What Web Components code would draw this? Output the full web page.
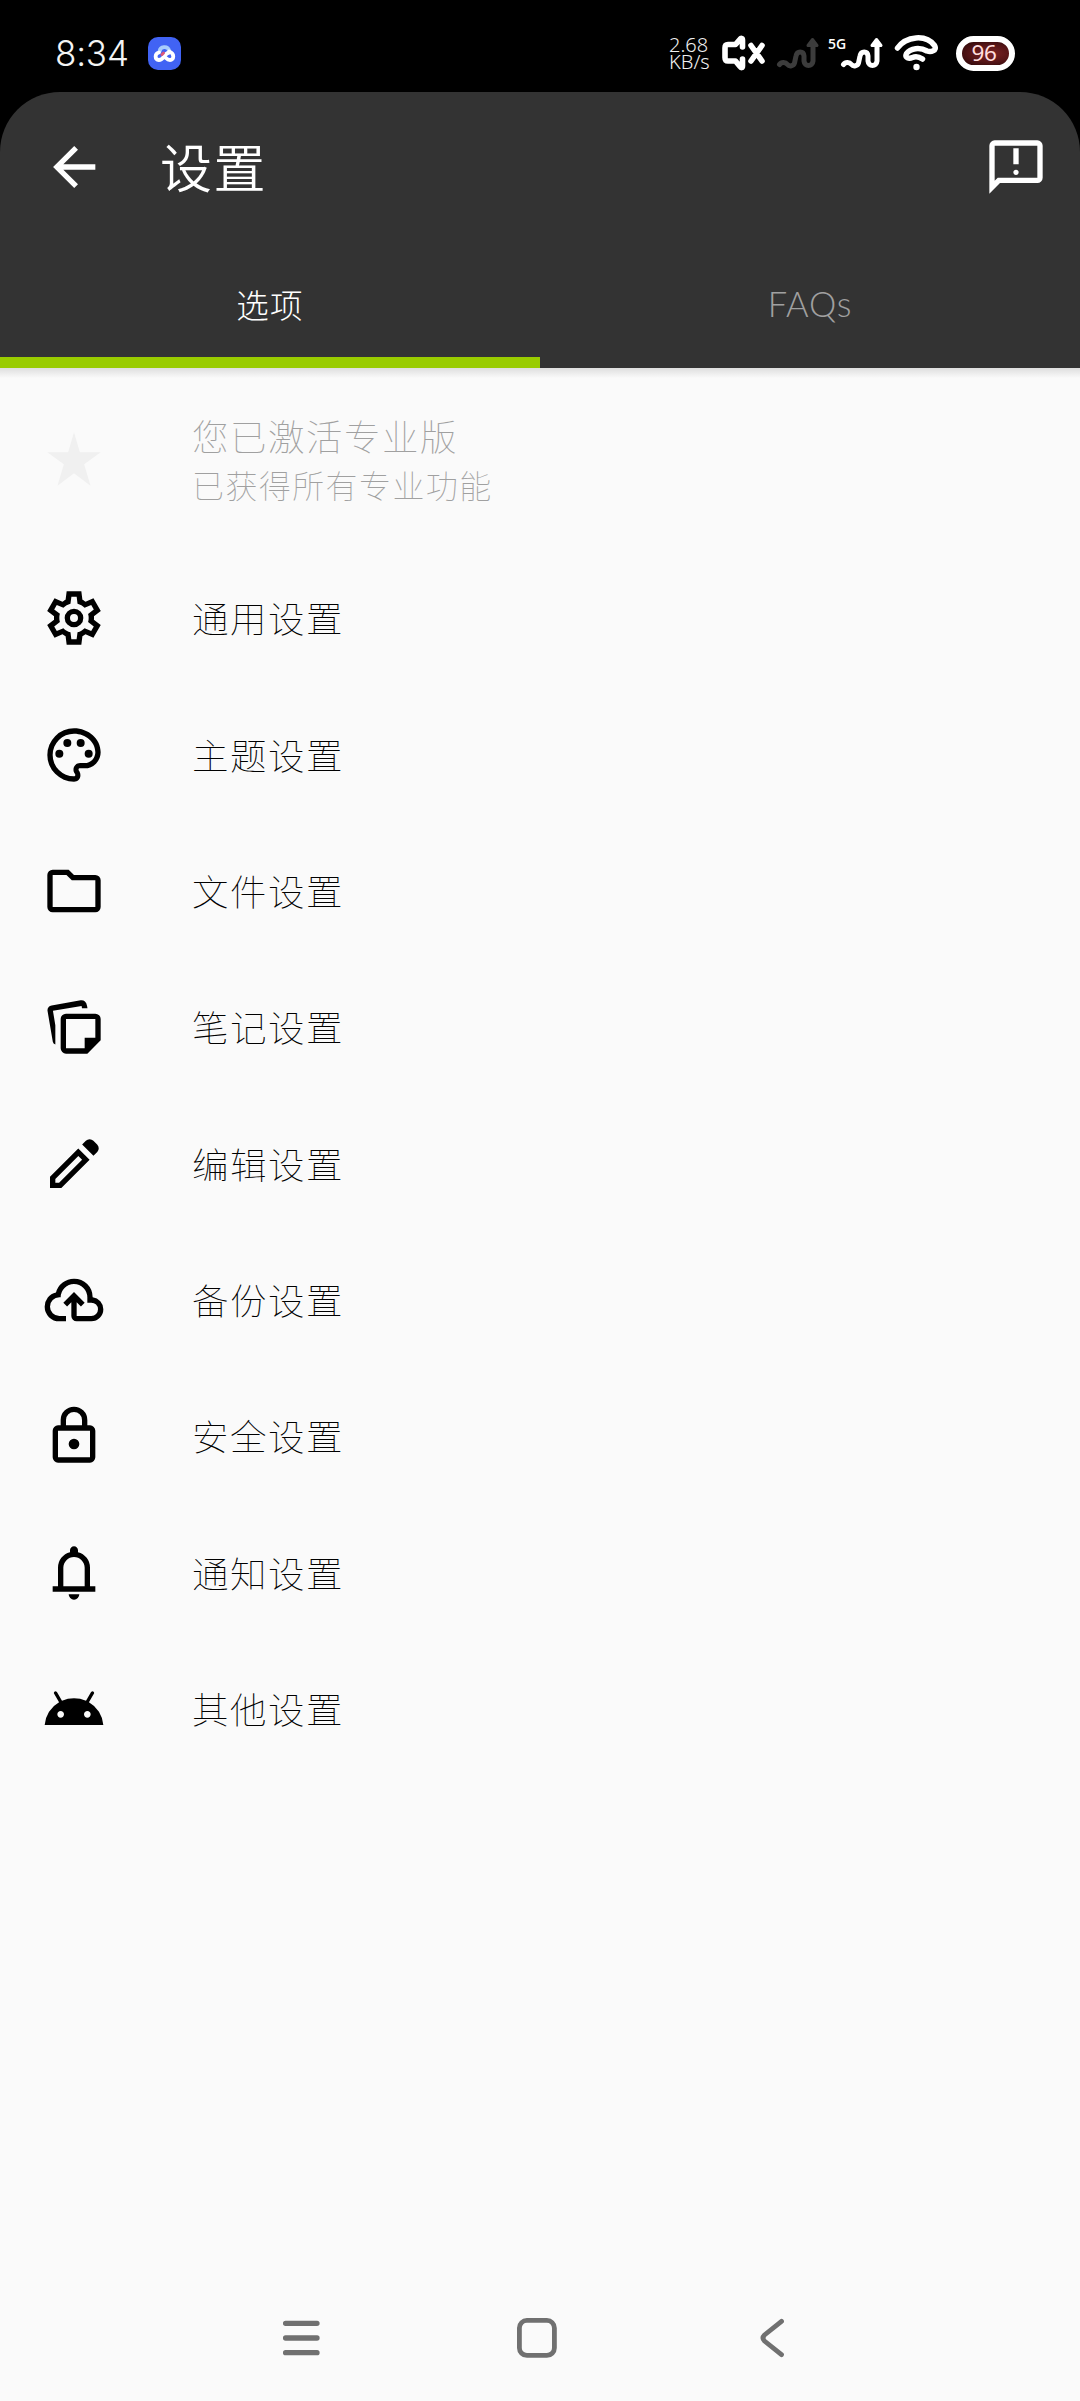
<!DOCTYPE html>
<html lang="zh-CN">
<head>
<meta charset="utf-8">
<title>设置</title>
<style>
  html, body { margin: 0; padding: 0; background: #fafafa; }
  body { width: 1080px; height: 2401px; overflow: hidden; font-family: "Noto Sans CJK SC", sans-serif; }
</style>
</head>
<body>
<settings-screen></settings-screen>
<script>
const define = (name, html, setup) => {
  const tpl = document.createElement('template');
  tpl.innerHTML = html;
  customElements.define(name, class extends HTMLElement {
    connectedCallback() {
      if (this.shadowRoot) return;
      this.attachShadow({ mode: 'open' }).appendChild(tpl.content.cloneNode(true));
      if (setup) setup(this, this.shadowRoot);
    }
  });
};

const ICONS = {
  back: '<path d="M20,11V13H8L13.5,18.5L12.08,19.92L4.16,12L12.08,4.08L13.5,5.5L8,11H20Z"/>',
  feedback: '<path d="M12 15q.425 0 .713-.288T13 14t-.288-.712T12 13t-.712.288T11 14t.288.713T12 15m-1-4h2V5h-2zM2 22V4q0-.825.588-1.412T4 2h16q.825 0 1.413.588T22 4v12q0 .825-.587 1.413T20 18H6zm3.15-6H20V4H4v13.125z"/>',
  star: '<path d="M12 2L14.2 9.500H22L15.800 14L18.200 22L12 17.300L5.800 22L8.200 14L2 9.500H9.800Z"/>',
  gear: '<path d="m9.25 22l-.4-3.2q-.325-.125-.612-.3t-.563-.375L4.7 19.375l-2.75-4.75l2.575-1.95Q4.5 12.5 4.5 12.337v-.675q0-.162.025-.337L1.95 9.375l2.75-4.75l2.975 1.25q.275-.2.575-.375t.6-.3l.4-3.2h5.5l.4 3.2q.325.125.613.3t.562.375l2.975-1.25l2.75 4.75l-2.575 1.95q.025.175.025.338v.674q0 .163-.05.338l2.575 1.95l-2.75 4.75l-2.95-1.25q-.275.2-.575.375t-.6.3l-.4 3.2zM11 20h1.975l.35-2.65q.775-.2 1.438-.587t1.212-.938l2.475 1.025l.975-1.7l-2.15-1.625q.125-.35.175-.737T17.5 12t-.05-.787t-.175-.738l2.15-1.625l-.975-1.7l-2.475 1.05q-.55-.575-1.212-.962t-1.438-.588L13 4h-1.975l-.35 2.65q-.775.2-1.437.588t-1.213.937L5.55 7.15l-.975 1.7l2.15 1.6q-.125.375-.175.75t-.05.8q0 .4.05.775t.175.75l-2.15 1.625l.975 1.7l2.475-1.05q.55.575 1.213.963t1.437.587z" fill-rule="evenodd"/><circle cx="12" cy="12" r="2.5" fill="none" stroke="currentColor" stroke-width="2"/>',
  palette: '<path fill-rule="evenodd" d="M12,22A10,10 0 0,1 2,12A10,10 0 0,1 12,2C17.5,2 22,6 22,11A6,6 0 0,1 16,17H14.2C13.9,17 13.7,17.2 13.7,17.5C13.7,17.6 13.8,17.7 13.8,17.8C14.2,18.3 14.4,18.9 14.4,19.5C14.5,20.9 13.4,22 12,22M12,4A8,8 0 0,0 4,12A8,8 0 0,0 12,20C12.3,20 12.5,19.8 12.5,19.5C12.5,19.3 12.4,19.2 12.4,19.1C12,18.6 11.8,18.1 11.8,17.5C11.8,16.1 12.9,15 14.3,15H16A4,4 0 0,0 20,11C20,7.1 16.4,4 12,4"/><circle cx="6.5" cy="11.5" r="1.5"/><circle cx="9.5" cy="7.5" r="1.5"/><circle cx="14.5" cy="7.5" r="1.5"/><circle cx="17.5" cy="11.5" r="1.5"/>',
  folder: '<path d="M4 20q-.825 0-1.412-.587T2 18V6q0-.825.588-1.412T4 4h6l2 2h8q.825 0 1.413.588T22 8v10q0 .825-.587 1.413T20 20zm0-2h16V8h-8.825l-2-2H4z"/>',
  notes: '<path fill-rule="evenodd" d="M9 7H20A2 2 0 0 1 22 9V17L17 22H9A2 2 0 0 1 7 20V9A2 2 0 0 1 9 7ZM9 9V20H16V16H20V9Z"/><path d="M5 18.6Q4.2 18.3 4.05 17.5L2.1 6.1Q1.9 5 2.6 4.4Q2.9 4 3.6 3.9L14.5 2Q15.5 1.9 16.1 2.4Q16.7 2.9 16.9 4.1L17.05 5H15L14.85 4.1L4.1 5.9L5 11.3Z"/>',
  pencil: '<path d="M5 19h1.4l8.625-8.625l-1.4-1.4L5 17.6zM19.3 8.925l-4.25-4.2l1.4-1.4q.575-.575 1.413-.575t1.412.575l1.4 1.4q.575.575.6 1.388t-.55 1.387zM17.85 10.4L7.25 21H3v-4.25l10.6-10.6z" fill-rule="evenodd"/>',
  cloud: '<path d="M6.5 20q-2.275 0-3.887-1.575T1 14.575q0-1.95 1.175-3.475T5.25 9.15q.625-2.3 2.5-3.725T12 4q2.925 0 4.963 2.038T19 11q1.725.2 2.863 1.488T23 15.5q0 1.875-1.312 3.188T18.5 20H13q-.825 0-1.412-.587T11 18v-5.15L9.4 14.4L8 13l4-4l4 4l-1.4 1.4l-1.6-1.55V18h5.5q1.05 0 1.775-.725T21 15.5t-.725-1.775T18.5 13H17v-2q0-2.075-1.463-3.537T12 6T8.463 7.463T7 11h-.5q-1.45 0-2.475 1.025T3 14.5t1.025 2.475T6.5 18H9v2z"/>',
  lock: '<path fill-rule="evenodd" d="M6 22q-.825 0-1.412-.587T4 20V10q0-.825.588-1.412T6 8h1V6q0-2.075 1.463-3.537T12 1t3.538 1.463T17 6v2h1q.825 0 1.413.588T20 10v10q0 .825-.587 1.413T18 22zm0-2h12V10H6zm6-3q.825 0 1.413-.587T14 15t-.587-1.412T12 13t-1.412.588T10 15t.588 1.413T12 17M9 8h6V6q0-1.25-.875-2.125T12 3t-2.125.875T9 6z"/>',
  bell: '<path fill-rule="evenodd" d="M4 19v-2h2v-7q0-2.075 1.25-3.687T10.5 4.2v-.7q0-.625.438-1.062T12 2t1.063.438T13.5 3.5v.7q2 .5 3.25 2.113T18 10v7h2v2zm8 3q-.825 0-1.412-.587T10 20h4q0 .825-.587 1.413T12 22m-4-5h8v-7q0-1.65-1.175-2.825T12 6T9.175 7.175T8 10z"/>',
  android: '<path fill-rule="evenodd" d="M1 18q.225-2.675 1.638-4.925T6.4 9.5L4.55 6.3q-.15-.225-.075-.475T4.8 5.45q.2-.125.45-.05t.4.3L7.5 8.9Q9.65 8 12 8t4.5.9l1.85-3.2q.15-.225.4-.3t.45.05q.25.125.325.375t-.075.475L17.6 9.5q2.35 1.325 3.762 3.575T23 18zm6-2.75q.525 0 .888-.363T8.25 14t-.363-.888T7 12.75t-.888.363T5.75 14t.363.888t.887.362m10 0q.525 0 .888-.363T18.25 14t-.363-.888T17 12.75t-.888.363t-.362.887t.363.888t.887.362"/>'
};

define('ui-icon', `<style>
  :host { display: block; width: 64px; height: 64px; flex: none; }
  svg { display: block; width: 64px; height: 64px; fill: currentColor; }
</style><svg viewBox="0 0 24 24"></svg>`,
  (el, root) => { root.querySelector('svg').innerHTML = ICONS[el.getAttribute('name')]; });

define('signal-icon', `<style>
  :host { display: block; width: 44px; height: 34px; flex: none; }
  svg { display: block; }
</style>
<svg width="44" height="34" viewBox="0 0 44 34" fill="none" stroke="currentColor" stroke-width="5" stroke-linecap="round" stroke-linejoin="round">
  <path d="M3.500 28.500C5.500 25.500 9.500 26 11.500 28.500C13.500 31 17.500 30 18.500 27L20 20C21 14.500 27.500 14.500 28 20V25C28.500 31 36.500 31 37 25V10"/>
  <path d="M36.500 3.500L41 9.500H32Z" fill="currentColor" stroke-width="3"/>
</svg>`);

define('status-bar', `<style>
  :host { display: flex; height: 92px; align-items: center; justify-content: space-between; background: #000; color: #fff;
    box-sizing: border-box; padding: 14px 65px 0 55px; }
  .side { display: flex; align-items: center; height: 40px; }
  .time { font: 300 35px/40px Inter, sans-serif; letter-spacing: -0.2px; color: #f4f4f4; width: 93px; }
  .speed { font: 300 20px/17px "Noto Sans", sans-serif; color: #f0f0f0; width: 52px; white-space: nowrap; }
  .mute { margin-right: 11px; }
  .dim { color: #3c3c3c; }
  .g5 { font: 600 14px/14px "Open Sans", sans-serif; width: 12px; height: 33px; margin-left: 8px; white-space: nowrap; }
  .wifi { margin-left: 10px; }
  .battery { display: flex; align-items: center; justify-content: center; box-sizing: border-box; width: 59px; height: 35px;
    border: 6px solid #fff; border-radius: 18px; margin-left: 17px; padding-right: 3px;
    background: radial-gradient(ellipse at 60% 50%, #7a2224 0%, #581517 50%, #260708 100%);
    font: 400 22.500px/24px "Noto Sans", sans-serif; color: #fdd; letter-spacing: -0.4px; }
  svg { display: block; flex: none; }
</style>
<div class="side">
  <div class="time">8:34</div>
  <svg width="33" height="33" viewBox="0 0 33 33"><rect width="33" height="33" rx="10" fill="#4163f4"/>
    <g fill="none" stroke-width="3.800" stroke-linecap="round" stroke-linejoin="round">
      <path d="M11.500 14.500A5 5 0 0 1 21.200 13.500" stroke="#a9cdfb"/>
      <path d="M21.200 14.500C27 16.500 26 23 22 23C19.500 23 18.500 21.500 17.500 20.500M11 15.500C6.500 16.500 6.500 22.500 11 23C13.500 23 14.500 21.500 16 19.500C18 17 19 15.500 21.500 15.500" stroke="#fff"/>
      <path d="M14 17.500L15.500 16" stroke="#d9567c" stroke-width="3"/>
    </g></svg>
</div>
<div class="side">
  <div class="speed">2.68<br>KB/s</div>
  <svg class="mute" width="44" height="36" viewBox="0 0 44 36" fill="none" stroke="#fff" stroke-width="5.600" stroke-linecap="round" stroke-linejoin="round">
    <path d="M21.500 12V5C21.500 3 20 3 19 4.300L14.500 9.500H7Q4 9.500 4 13V22.500Q4 26 7 26H14.500L19 31.500C20 33 21.500 33 21.500 31V24M30 10.500L41 26M41 10.500L30 26"/></svg>
  <signal-icon class="dim"></signal-icon>
  <div class="g5">5G</div>
  <signal-icon></signal-icon>
  <svg class="wifi" width="45" height="38" viewBox="0 0 45 38" fill="none" stroke="#fff" stroke-width="5.500" stroke-linecap="round" stroke-linejoin="round">
    <path d="M3.500 14C12 2 32 0 40.500 11.500C43.500 16.500 37 18.500 33 17C26 13 16.500 14 12.500 19.500C10.500 24 15 25 18.500 23.500C22 22 25.500 23 28.500 25"/>
    <circle cx="22.500" cy="33" r="3.200" fill="#fff" stroke="none"/></svg>
  <div class="battery">96</div>
</div>`);

define('app-bar', `<style>
  :host { display: flex; align-items: center; height: 149px; box-sizing: border-box; padding: 0 32px 0 42px; color: #fff; }
  h1 { flex: 1; margin: 0 0 2px 54px; font-size: 52px; line-height: 80px; font-weight: 350; letter-spacing: 1.500px; }
</style>
<ui-icon name="back"></ui-icon><h1><slot></slot></h1><ui-icon name="feedback"></ui-icon>`);

define('tab-item', `<style>
  :host { display: flex; flex: 1; align-items: center; justify-content: center; box-sizing: border-box; height: 127px;
    font-size: 32.500px; line-height: 50px; letter-spacing: 1.200px; font-weight: 300; color: #a0a0a0; border-bottom: 11px solid transparent; padding-top: 9px; }
  :host([selected]) { color: #fff; border-bottom-color: #9c0; }
  :host([latin]) { font-family: Lato, sans-serif; font-size: 34.500px; letter-spacing: 0.800px; }
</style><span><slot></slot></span>`);

define('pro-row', `<style>
  :host { display: flex; align-items: center; height: 182px; padding-left: 42px; }
  ui-icon { color: #f0f0f0; }
  .text { margin-left: 86px; color: #a0a0a0; font-weight: 100; padding-top: 1px; }
  .t { font-size: 36.500px; line-height: 50px; letter-spacing: 1.500px; }
  .s { font-size: 32px; line-height: 47px; letter-spacing: 1.400px; }
</style>
<ui-icon name="star"></ui-icon>
<div class="text"><div class="t"><slot></slot></div><div class="s"><slot name="sub"></slot></div></div>`);

define('setting-row', `<style>
  :host { display: flex; align-items: center; height: 136.360px; padding-left: 42px; color: #000; }
  span { margin-left: 86px; font-size: 36.500px; line-height: 56px; letter-spacing: 1.500px; font-weight: 100; }
</style>
<ui-icon></ui-icon><span><slot></slot></span>`,
  (el, root) => {
    const old = root.querySelector('ui-icon');
    const icon = document.createElement('ui-icon');
    icon.setAttribute('name', el.getAttribute('icon'));
    old.replaceWith(icon);
  });

define('nav-bar', `<style>
  :host { display: flex; align-items: center; height: 126px; box-sizing: border-box; padding: 0 293px 0 281px; justify-content: space-between; }
  svg { display: block; }
  .home { margin-right: 7px; }
</style>
<svg width="40" height="40" viewBox="0 0 40 40" stroke="#707070" stroke-width="5.300" stroke-linecap="round"><path d="M4.600 5.300H36M4.600 20H36M4.600 34.700H36"/></svg>
<svg class="home" width="44" height="44" viewBox="0 0 44 44" fill="none" stroke="#707070" stroke-width="4.800"><rect x="4.400" y="4.400" width="35" height="35" rx="7.500"/></svg>
<svg width="28" height="40" viewBox="0 0 28 40" fill="none" stroke="#707070" stroke-width="4.800" stroke-linecap="round"><path d="M22.500 3.300L5.500 17Q2.500 20 5.500 23L22.500 36.700"/></svg>`);

define('settings-screen', `<style>
  :host { display: flex; flex-direction: column; width: 1080px; height: 2401px; background: #fafafa; }
  .top { background: #000; }
  header { background: #333; border-radius: 60px 60px 0 0; }
  .tabs { display: flex; }
  .shade { height: 10px; margin-bottom: -10px; background: linear-gradient(#dedede, #fafafa); }
  main { flex: 1; }
</style>
<div class="top"><status-bar></status-bar>
<header>
  <app-bar>设置</app-bar>
  <div class="tabs"><tab-item selected>选项</tab-item><tab-item latin>FAQs</tab-item></div>
</header></div>
<div class="shade"></div>
<main>
  <pro-row>您已激活专业版<span slot="sub">已获得所有专业功能</span></pro-row>
  <setting-row icon="gear">通用设置</setting-row>
  <setting-row icon="palette">主题设置</setting-row>
  <setting-row icon="folder">文件设置</setting-row>
  <setting-row icon="notes">笔记设置</setting-row>
  <setting-row icon="pencil">编辑设置</setting-row>
  <setting-row icon="cloud">备份设置</setting-row>
  <setting-row icon="lock">安全设置</setting-row>
  <setting-row icon="bell">通知设置</setting-row>
  <setting-row icon="android">其他设置</setting-row>
</main>
<nav-bar></nav-bar>`);
</script>
</body>
</html>
